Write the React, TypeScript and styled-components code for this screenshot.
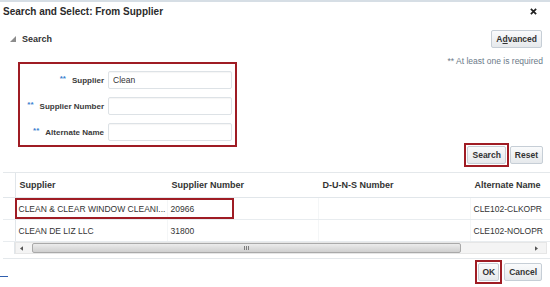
import styled, { createGlobalStyle } from 'styled-components';

const GlobalStyle = createGlobalStyle`
  html, body {
    margin: 0;
    padding: 0;
    background: #fff;
  }
  body {
    font-family: "Liberation Sans", Arial, sans-serif;
    color: #333;
  }
`;

const rows = [
  { name: 'CLEAN & CLEAR WINDOW CLEANI...', number: '20966', duns: '', alt: 'CLE102-CLKOPR' },
  { name: 'CLEAN DE LIZ LLC', number: '31800', duns: '', alt: 'CLE102-NOLOPR' },
];

const fields = [
  { label: 'Supplier', value: 'Clean' },
  { label: 'Supplier Number', value: '' },
  { label: 'Alternate Name', value: '' },
];

const App = () => {
  return (
    <Dialog>
      <GlobalStyle />
      <Header>
        <Title>Search and Select: From Supplier</Title>
        <Close viewBox="0 0 8 8">
          <path d="M1 1 L7 7 M7 1 L1 7" />
        </Close>
      </Header>

      <SearchBar>
        <Toggle>
          <svg width="6" height="6" viewBox="0 0 6 6">
            <polygon points="6,0 6,6 0,6" fill="#8c8c8c" />
          </svg>
          <span>Search</span>
        </Toggle>
        <Button>
          A<u>d</u>vanced
        </Button>
      </SearchBar>

      <Content>
        <FormBox>
          {fields.map((f) => (
            <FieldRow key={f.label}>
              <Label>
                <Req>**</Req>
                {f.label}
              </Label>
              <Input defaultValue={f.value} />
            </FieldRow>
          ))}
        </FormBox>
        <Side>
          <Note>** At least one is required</Note>
          <ButtonRow>
            <Marked>
              <Button>Search</Button>
            </Marked>
            <Button>Reset</Button>
          </ButtonRow>
        </Side>
      </Content>

      <TableArea>
        <Table>
          <colgroup>
            <col style={{ width: 12 }} />
            <col style={{ width: 152 }} />
            <col style={{ width: 151 }} />
            <col style={{ width: 152 }} />
            <col style={{ width: 140 }} />
          </colgroup>
          <thead>
            <tr>
              <Th $select />
              <Th>Supplier</Th>
              <Th>Supplier Number</Th>
              <Th>D-U-N-S Number</Th>
              <Th>Alternate Name</Th>
            </tr>
          </thead>
          <tbody>
            {rows.map((r) => (
              <tr key={r.number}>
                <Td $select />
                <Td>{r.name}</Td>
                <Td>{r.number}</Td>
                <Td>{r.duns}</Td>
                <Td>{r.alt}</Td>
              </tr>
            ))}
          </tbody>
        </Table>
        <RowMark />
        <ScrollRow>
          <ScrollGutter />
          <Scrollbar>
            <Arrow viewBox="0 0 4 6">
              <polygon points="4,0 4,6 0,3" />
            </Arrow>
            <Thumb>
              <Grip>
                <i />
                <i />
                <i />
              </Grip>
            </Thumb>
            <Arrow viewBox="0 0 4 6">
              <polygon points="0,0 0,6 4,3" />
            </Arrow>
          </Scrollbar>
        </ScrollRow>
      </TableArea>

      <Footer>
        <FocusLine />
        <FooterButtons>
          <Marked>
            <Button $narrow>OK</Button>
          </Marked>
          <Button>Cancel</Button>
        </FooterButtons>
      </Footer>
    </Dialog>
  );
};

export default App;

const Dialog = styled.div`
  width: 550px;
  height: 287px;
  overflow: hidden;
  box-sizing: border-box;
  border-top: 2px solid #d6dee5;
  background: #fff;
`;

const Header = styled.div`
  height: 19px;
  display: flex;
  align-items: center;
  justify-content: space-between;
  padding: 0 13px 0 3px;
`;

const Title = styled.div`
  font-size: 10px;
  font-weight: bold;
  color: #2b2b2b;
`;

const Close = styled.svg`
  width: 7px;
  height: 7px;
  stroke: #222;
  stroke-width: 2;
`;

const SearchBar = styled.div`
  margin-top: 9px;
  display: flex;
  align-items: center;
  justify-content: space-between;
  padding: 0 8px 0 10px;
`;

const Toggle = styled.div`
  display: flex;
  align-items: center;
  gap: 6px;
  font-size: 9px;
  font-weight: bold;
  color: #333;
`;

const Button = styled.button<{ $narrow?: boolean }>`
  height: 18px;
  padding: 0 ${(p) => (p.$narrow ? '3px' : '4px')};
  min-width: ${(p) => (p.$narrow ? '19px' : '0')};
  box-sizing: border-box;
  border: 1px solid #c6ced6;
  border-radius: 2px;
  background: linear-gradient(#fafbfc, #e6e9ec);
  font-family: "Liberation Sans", Arial, sans-serif;
  font-size: 8.5px;
  font-weight: bold;
  color: #333;
  cursor: pointer;

  u {
    text-decoration: underline;
  }
`;

const Content = styled.div`
  margin-top: 8px;
  display: flex;
  justify-content: space-between;
  align-items: flex-start;
  padding: 0 7px 0 18px;
`;

const FormBox = styled.div`
  margin-top: 6px;
  width: 219px;
  box-sizing: border-box;
  border: 2px solid #9f1c24;
  padding: 7px 3px 4px 0;
  display: flex;
  flex-direction: column;
  gap: 8px;
`;

const FieldRow = styled.div`
  display: grid;
  grid-template-columns: 84px 124px;
  column-gap: 4px;
  align-items: center;
`;

const Label = styled.label`
  text-align: right;
  font-size: 8px;
  font-weight: bold;
  color: #3a3a3a;
  white-space: nowrap;
`;

const Req = styled.span`
  color: #3d7fcf;
  margin-right: 6px;
  position: relative;
  top: -2px;
`;

const Input = styled.input`
  height: 18px;
  box-sizing: border-box;
  border: 1px solid #dde2e6;
  border-radius: 2px;
  padding: 0 4px;
  font-family: "Liberation Sans", Arial, sans-serif;
  font-size: 8.5px;
  color: #333;
  background: #fff;
  box-shadow: inset 0 1px 1px rgba(0, 0, 0, 0.04);
  outline: none;
`;

const Side = styled.div`
  height: 111px;
  display: flex;
  flex-direction: column;
  justify-content: space-between;
  align-items: flex-end;
`;

const Note = styled.div`
  font-size: 8.5px;
  color: #6b7a89;
  line-height: 10px;
`;

const ButtonRow = styled.div`
  display: flex;
  align-items: center;
  gap: 1px;
`;

const Marked = styled.div`
  display: flex;
  border: 2px solid #9f1c24;
  padding: 1px;
`;

const TableArea = styled.div`
  position: relative;
  margin: 5px 0 0 3px;
  border-top: 1px solid #e4e8eb;
  border-bottom: 1px solid #e4e8eb;
  padding-bottom: 4px;
`;

const Table = styled.table`
  table-layout: fixed;
  border-collapse: collapse;
  width: 607px;
`;

const Th = styled.th<{ $select?: boolean }>`
  height: 24px;
  padding: 0 4px;
  text-align: left;
  font-size: 9px;
  font-weight: bold;
  color: #333;
  border-bottom: 1px solid #e1e6ea;
  border-right: 1px solid ${(p) => (p.$select ? '#e1e6ea' : 'transparent')};
  white-space: nowrap;
  overflow: hidden;
`;

const Td = styled.td<{ $select?: boolean }>`
  height: 21px;
  padding: 0 4px 0 3px;
  font-size: 8.5px;
  color: #333;
  border-bottom: 1px solid #e8ecef;
  border-right: 1px solid ${(p) => (p.$select ? '#e1e6ea' : '#f4f6f7')};
  white-space: nowrap;
  overflow: hidden;
`;

const RowMark = styled.div`
  position: absolute;
  left: 12px;
  top: 25px;
  width: 219px;
  height: 21px;
  box-sizing: border-box;
  border: 2px solid #9f1c24;
  pointer-events: none;
`;

const ScrollRow = styled.div`
  display: flex;
  height: 12px;
`;

const ScrollGutter = styled.div`
  width: 11px;
  border-right: 1px solid #e1e6ea;
`;

const Scrollbar = styled.div`
  flex: 1;
  display: flex;
  align-items: center;
  gap: 5px;
  padding: 0 8px 0 4px;
  margin-right: 3px;
  background: #f4f4f4;
  border: 1px solid #e6e6e6;
  box-sizing: border-box;
`;

const Arrow = styled.svg`
  width: 3px;
  height: 5px;
  fill: #555;
  flex: none;
`;

const Thumb = styled.div`
  width: 429px;
  height: 10px;
  box-sizing: border-box;
  border: 1px solid #a9a9a9;
  border-radius: 2px;
  background: linear-gradient(#ececec, #cfcfcf);
  display: flex;
  align-items: center;
  justify-content: center;
  margin-right: auto;
  margin-left: 4px;
`;

const Grip = styled.div`
  display: flex;
  gap: 1px;

  i {
    width: 1px;
    height: 4px;
    background: #7d7d7d;
  }
`;

const Footer = styled.div`
  margin-top: 1px;
  display: flex;
  justify-content: space-between;
  align-items: center;
  padding-right: 8px;
`;

const FocusLine = styled.span`
  width: 8px;
  margin-top: 8px;
  border-bottom: 1px solid #2f5fae;
`;

const FooterButtons = styled.div`
  display: flex;
  align-items: center;
  gap: 2px;
`;
